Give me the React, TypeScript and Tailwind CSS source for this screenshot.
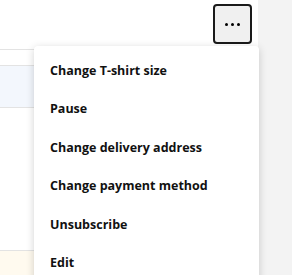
const items=["Change T-shirt size","Pause","Change delivery address","Change payment method","Unsubscribe","Edit"];

export default function App(){
  return (
    <div className="relative flex w-[292px] h-[275px] overflow-hidden bg-white" style={{fontFamily:'"Open Sans", "Noto Sans", sans-serif'}}>
      <div className="flex-1 flex flex-col">
        <div className="h-[50px] flex justify-end items-start pt-[4px] pr-[6px] border-b border-[#e3e3e3]">
          <button className="w-[39px] h-[40px] rounded-[4px] border-2 border-[#1a1a1a] bg-[#f0f0f0] flex items-center justify-center gap-[3px]">
            <span className="w-[3px] h-[3px] rounded-full bg-black"></span>
            <span className="w-[3px] h-[3px] rounded-full bg-black"></span>
            <span className="w-[3px] h-[3px] rounded-full bg-black"></span>
          </button>
        </div>
        <div className="h-[16px] border-b border-[#e3e3e3]"></div>
        <div className="h-[42px] bg-[#f3f7fd] border-b border-[#e3e3e3]"></div>
        <div className="h-[143px] border-b border-[#e3e3e3]"></div>
        <div className="flex-1 bg-[#fffaef]"></div>
      </div>
      <div className="w-[34px] bg-[#f3f3f3]"></div>

      <div className="absolute left-[34px] top-[46px] w-[225px] bg-white rounded-[4px] shadow-[0_2px_8px_rgba(0,0,0,0.18)] pt-[6px] pb-[10px]">
        {items.map(item=>(
          <div key={item} className="h-[38.5px] flex items-center pl-[16px] text-[12.5px] font-bold text-[#111]">
            {item}
          </div>
        ))}
      </div>
    </div>
  );
}
